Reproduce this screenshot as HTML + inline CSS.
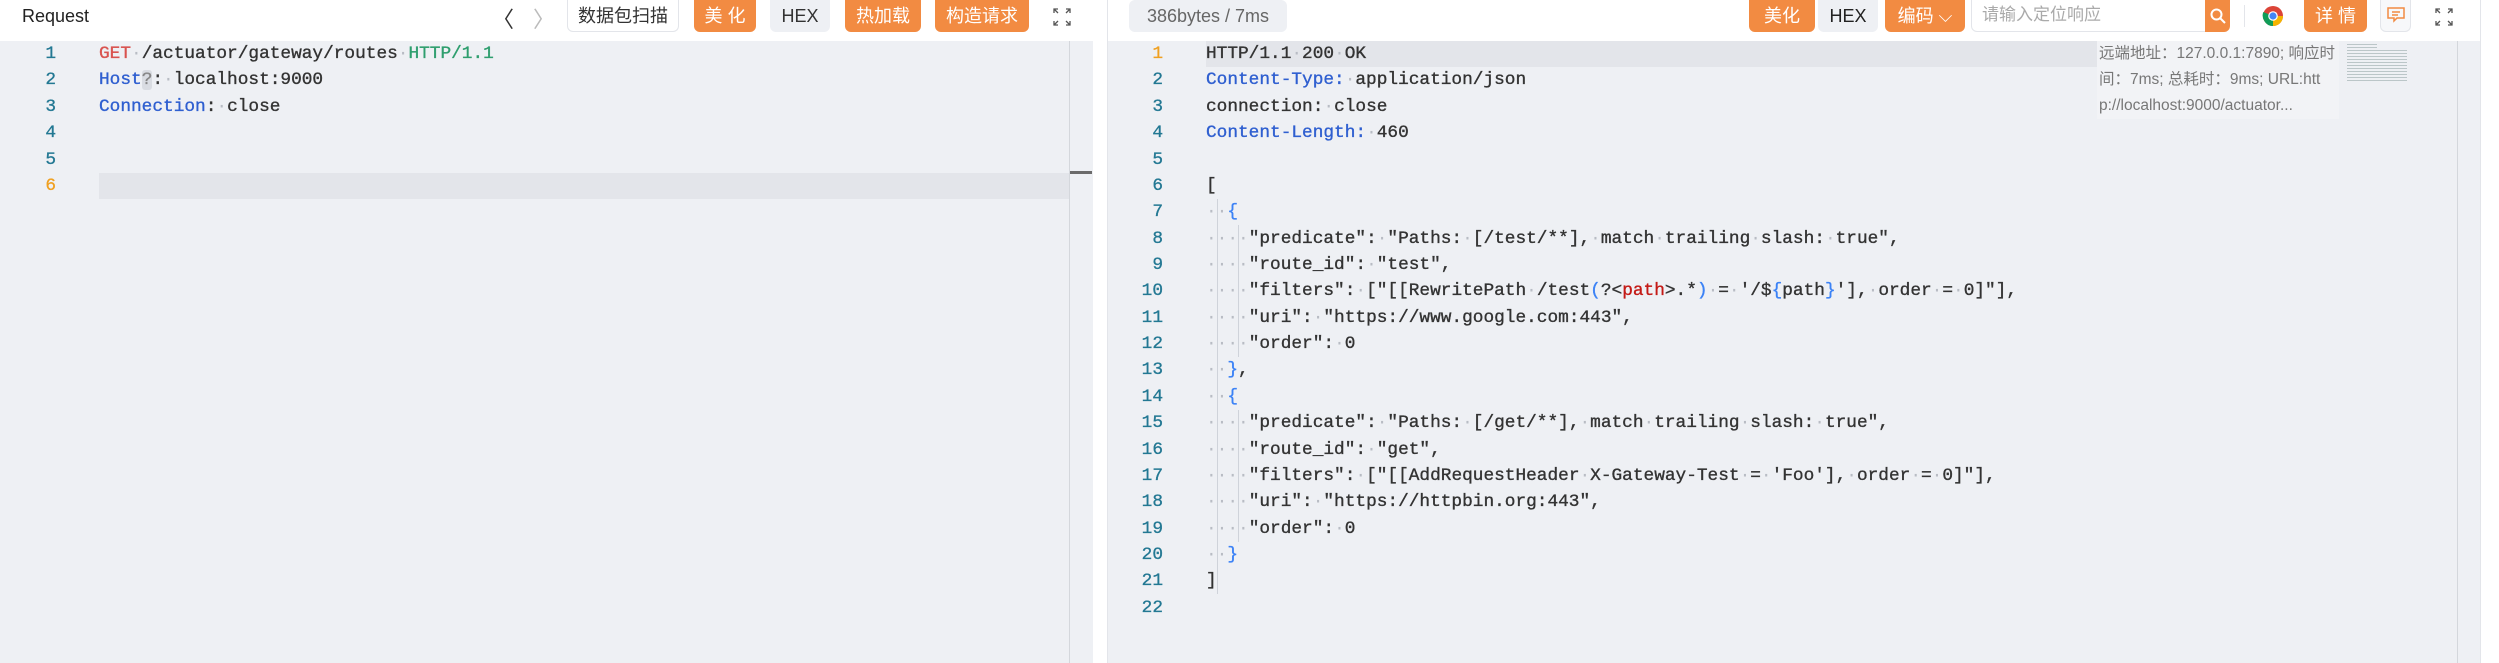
<!DOCTYPE html>
<html><head><meta charset="utf-8"><style>
*{margin:0;padding:0;box-sizing:border-box}
body{width:2499px;height:663px;background:#fff;position:relative;overflow:hidden;font-family:"Liberation Sans","Noto Sans CJK SC",sans-serif}
.abs{position:absolute}
.ed{background:#eef0f4}
.btn{position:absolute;top:0;height:32px;border-radius:0 0 6px 6px;font-size:18px;line-height:32px;text-align:center;color:#fff;background:#f28b42}
.gbtn{background:#eef0f4;color:#333}
.ln{position:absolute;width:40px;text-align:right;font-family:"Liberation Mono",monospace;font-size:17.8px;color:#237893;line-height:26px;-webkit-text-stroke:0.3px currentColor}
.cl{position:absolute;font-family:"Liberation Mono",monospace;font-size:17.8px;color:#333;line-height:26px;white-space:pre;-webkit-text-stroke:0.35px currentColor}
.d{color:#b8bcc4;-webkit-text-stroke:0}
.k{color:#2f5fd0}
.r{color:#d9534f}
.g{color:#2e9e6e}
.b{color:#3b82f6}
.rr{color:#c41a16}
.guide{position:absolute;width:1px;background:#cfd3da}
</style></head><body>
<!-- Left header -->
<div class="abs" style="left:22px;top:4px;font-size:18px;color:#222;line-height:24px">Request</div>
<div class="abs" style="left:492px;top:2px;font-size:22px;color:#333">&#x2329;</div>
<div class="abs" style="left:533px;top:2px;font-size:22px;color:#bbb">&#x232A;</div>
<div class="btn" style="left:567px;width:112px;background:#fff;color:#333;border:1px solid #e3e5ea;border-top:none">数据包扫描</div>
<div class="btn" style="left:694px;width:62px">美 化</div>
<div class="btn gbtn" style="left:770px;width:60px">HEX</div>
<div class="btn" style="left:845px;width:76px">热加载</div>
<div class="btn" style="left:935px;width:94px">构造请求</div>
<svg class="abs" style="left:1052px;top:7px" width="20" height="20" viewBox="0 0 20 20" fill="none" stroke="#555" stroke-width="1.3"><path d="M2 6V2h4M2 2l4 4M18 6V2h-4M18 2l-4 4M2 14v4h4M2 18l4-4M18 14v4h-4M18 18l-4-4"/></svg>
<!-- Left editor -->
<div class="abs ed" style="left:0;top:41px;width:1093px;height:622px"></div>
<div class="abs" style="left:1069px;top:41px;width:1px;height:622px;background:#d4d7dc"></div>
<div class="abs" style="left:1070px;top:171px;width:22px;height:3px;background:#6b6b6b"></div>
<div class="abs" style="left:99px;top:173px;width:970px;height:26px;background:#e3e5ea"></div>
<div class="ln" style="left:16px;top:41px">1</div><div class="cl" style="left:99px;top:41px"><span class="r">GET</span><span class="d">·</span>/actuator/gateway/routes<span class="d">·</span><span class="g">HTTP/1.1</span></div>
<div class="ln" style="left:16px;top:67px">2</div><div class="cl" style="left:99px;top:67px"><span class="k">Host</span><span style="background:#d9dce2;color:#888;border-radius:3px">?</span>:<span class="d">·</span>localhost:9000</div>
<div class="ln" style="left:16px;top:94px">3</div><div class="cl" style="left:99px;top:94px"><span class="k">Connection</span>:<span class="d">·</span>close</div>
<div class="ln" style="left:16px;top:120px">4</div>
<div class="ln" style="left:16px;top:147px">5</div>
<div class="ln" style="left:16px;top:173px;color:#f0a020">6</div>
<!-- gap -->
<div class="abs" style="left:1107px;top:0;width:1px;height:663px;background:#e3e5ea"></div>
<div class="abs" style="left:2480px;top:0;width:1px;height:663px;background:#e3e5ea"></div>
<!-- Right header -->
<div class="btn gbtn" style="left:1129px;width:158px;color:#666;border-radius:6px">386bytes / 7ms</div>
<div class="btn" style="left:1749px;width:66px">美化</div>
<div class="btn gbtn" style="left:1818px;width:60px;color:#222">HEX</div>
<div class="btn" style="left:1885px;width:80px">编码 ⌵</div>
<div class="abs" style="left:1971px;top:0;width:236px;height:32px;border:1px solid #e3e5ea;border-top:none;border-radius:0 0 0 6px;font-size:17px;color:#aaa;line-height:30px;padding-left:10px">请输入定位响应</div>
<div class="btn" style="left:2205px;width:25px;border-radius:0 0 6px 0"><svg width="18" height="18" viewBox="0 0 18 18" style="margin-top:7px" fill="none" stroke="#fff" stroke-width="2"><circle cx="7.5" cy="7.5" r="5"/><path d="M11 11l5 5"/></svg></div>
<div class="abs" style="left:2244px;top:5px;width:1px;height:22px;background:#e3e5ea"></div>
<svg class="abs" style="left:2262px;top:5px" width="22" height="22" viewBox="0 0 22 22"><circle cx="11" cy="11" r="10" fill="#db4437"/><path d="M11 11L2.3 16A10 10 0 0 0 11 21z" fill="#0f9d58"/><path d="M11 11l-8.7 5A10 10 0 0 1 1.3 7z" fill="#0f9d58"/><path d="M11 11L21 11A10 10 0 0 1 11 21z" fill="#f4b400"/><circle cx="11" cy="11" r="4.8" fill="#fff"/><circle cx="11" cy="11" r="3.6" fill="#4285f4"/></svg>
<div class="btn" style="left:2304px;width:63px">详 情</div>
<div class="abs" style="left:2380px;top:0;width:31px;height:32px;border:1px solid #e3e5ea;border-top:none;border-radius:0 0 6px 6px;background:#f7f8fa"><svg width="20" height="20" viewBox="0 0 20 20" style="margin:5px 0 0 5px" fill="none" stroke="#f28b42" stroke-width="1.5"><path d="M2 3h16v10h-7l-3 3v-3H2z"/><path d="M6 7h8M6 10h6"/></svg></div>
<svg class="abs" style="left:2434px;top:7px" width="20" height="20" viewBox="0 0 20 20" fill="none" stroke="#555" stroke-width="1.3"><path d="M2 6V2h4M2 2l4 4M18 6V2h-4M18 2l-4 4M2 14v4h4M2 18l4-4M18 14v4h-4M18 18l-4-4"/></svg>
<!-- Right editor -->
<div class="abs ed" style="left:1108px;top:41px;width:1372px;height:622px"></div>
<div class="abs" style="left:2457px;top:41px;width:1px;height:622px;background:#d4d7dc"></div>
<div class="abs" style="left:1206px;top:41px;width:891px;height:26px;background:#e3e5ea"></div>
<div class="abs" style="left:2097px;top:41px;width:242px;height:78px;background:#f2f3f6;font-size:15.5px;color:#777;line-height:26px;padding-left:2px;white-space:nowrap;overflow:hidden">远端地址：127.0.0.1:7890; 响应时<br>间：7ms; 总耗时：9ms; URL:htt<br>p://localhost:9000/actuator...</div>
<div class="abs" style="left:2347px;top:42px;width:60px;height:40px;opacity:.6;background:repeating-linear-gradient(#eef0f4 0 2px,#9aa 2px 3px);clip-path:polygon(0 0,50% 0,50% 20%,100% 20%,100% 100%,0 100%)"></div>
<div class="guide" style="left:1217px;top:199px;height:395px"></div>
<div class="guide" style="left:1238px;top:225px;height:132px"></div>
<div class="guide" style="left:1238px;top:410px;height:132px"></div>
<div class="ln" style="left:1123px;top:41px;color:#f0a020">1</div><div class="cl" style="left:1206px;top:41px">HTTP/1.1<span class="d">·</span>200<span class="d">·</span>OK</div>
<div class="ln" style="left:1123px;top:67px">2</div><div class="cl" style="left:1206px;top:67px"><span class="k">Content-Type:</span><span class="d">·</span>application/json</div>
<div class="ln" style="left:1123px;top:94px">3</div><div class="cl" style="left:1206px;top:94px">connection:<span class="d">·</span>close</div>
<div class="ln" style="left:1123px;top:120px">4</div><div class="cl" style="left:1206px;top:120px"><span class="k">Content-Length:</span><span class="d">·</span>460</div>
<div class="ln" style="left:1123px;top:147px">5</div>
<div class="ln" style="left:1123px;top:173px">6</div><div class="cl" style="left:1206px;top:173px">[</div>
<div class="ln" style="left:1123px;top:199px">7</div><div class="cl" style="left:1206px;top:199px"><span class="d">··</span><span class="b">{</span></div>
<div class="ln" style="left:1123px;top:226px">8</div><div class="cl" style="left:1206px;top:226px"><span class="d">····</span>"predicate":<span class="d">·</span>"Paths:<span class="d">·</span>[/test/**],<span class="d">·</span>match<span class="d">·</span>trailing<span class="d">·</span>slash:<span class="d">·</span>true",</div>
<div class="ln" style="left:1123px;top:252px">9</div><div class="cl" style="left:1206px;top:252px"><span class="d">····</span>"route_id":<span class="d">·</span>"test",</div>
<div class="ln" style="left:1123px;top:278px">10</div><div class="cl" style="left:1206px;top:278px"><span class="d">····</span>"filters":<span class="d">·</span>["[[RewritePath<span class="d">·</span>/test<span class="b">(</span>?&lt;<span class="rr">path</span>&gt;.*<span class="b">)</span><span class="d">·</span>=<span class="d">·</span>'/$<span class="b">{</span>path<span class="b">}</span>'],<span class="d">·</span>order<span class="d">·</span>=<span class="d">·</span>0]"],</div>
<div class="ln" style="left:1123px;top:305px">11</div><div class="cl" style="left:1206px;top:305px"><span class="d">····</span>"uri":<span class="d">·</span>"https://www.google.com:443",</div>
<div class="ln" style="left:1123px;top:331px">12</div><div class="cl" style="left:1206px;top:331px"><span class="d">····</span>"order":<span class="d">·</span>0</div>
<div class="ln" style="left:1123px;top:357px">13</div><div class="cl" style="left:1206px;top:357px"><span class="d">··</span><span class="b">}</span>,</div>
<div class="ln" style="left:1123px;top:384px">14</div><div class="cl" style="left:1206px;top:384px"><span class="d">··</span><span class="b">{</span></div>
<div class="ln" style="left:1123px;top:410px">15</div><div class="cl" style="left:1206px;top:410px"><span class="d">····</span>"predicate":<span class="d">·</span>"Paths:<span class="d">·</span>[/get/**],<span class="d">·</span>match<span class="d">·</span>trailing<span class="d">·</span>slash:<span class="d">·</span>true",</div>
<div class="ln" style="left:1123px;top:437px">16</div><div class="cl" style="left:1206px;top:437px"><span class="d">····</span>"route_id":<span class="d">·</span>"get",</div>
<div class="ln" style="left:1123px;top:463px">17</div><div class="cl" style="left:1206px;top:463px"><span class="d">····</span>"filters":<span class="d">·</span>["[[AddRequestHeader<span class="d">·</span>X-Gateway-Test<span class="d">·</span>=<span class="d">·</span>'Foo'],<span class="d">·</span>order<span class="d">·</span>=<span class="d">·</span>0]"],</div>
<div class="ln" style="left:1123px;top:489px">18</div><div class="cl" style="left:1206px;top:489px"><span class="d">····</span>"uri":<span class="d">·</span>"https://httpbin.org:443",</div>
<div class="ln" style="left:1123px;top:516px">19</div><div class="cl" style="left:1206px;top:516px"><span class="d">····</span>"order":<span class="d">·</span>0</div>
<div class="ln" style="left:1123px;top:542px">20</div><div class="cl" style="left:1206px;top:542px"><span class="d">··</span><span class="b">}</span></div>
<div class="ln" style="left:1123px;top:568px">21</div><div class="cl" style="left:1206px;top:568px">]</div>
<div class="ln" style="left:1123px;top:595px">22</div>
</body></html>
